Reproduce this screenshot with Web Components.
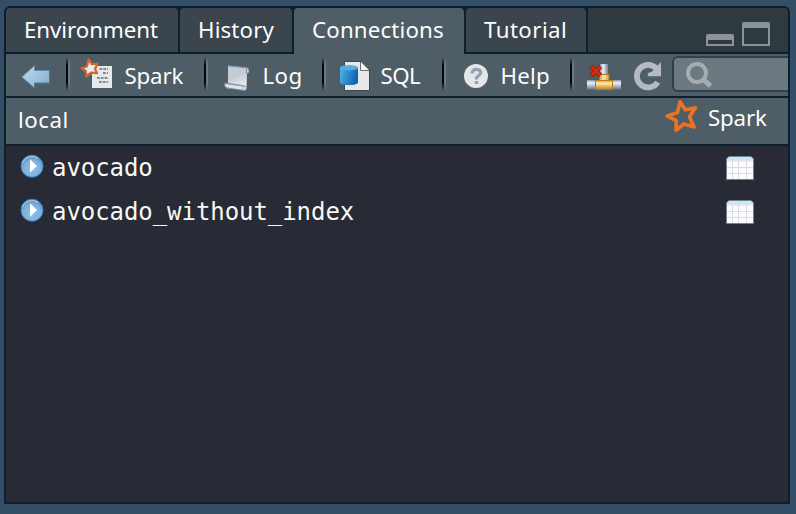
<!DOCTYPE html>
<html lang="en"><head><meta charset="utf-8"><title>Connections</title>
<style>
html,body{margin:0;height:100%;background:#344e65;overflow:hidden}
</style></head><body>
<connections-app></connections-app>
<script>
const define=(name,html,after)=>customElements.define(name,class extends HTMLElement{
  constructor(){super();this.attachShadow({mode:'open'}).innerHTML=html;}
  connectedCallback(){if(after)after(this);}
});
const ctx=document.createElement('canvas').getContext('2d');

// Label whose letter spacing is adjusted to fill the "ink" width.
define('ui-text',`<style>:host{display:block;font:22.3px/30px "Noto Sans","Open Sans",sans-serif;color:#fbfcfc;white-space:pre}</style><slot></slot>`,el=>{
  const t=el.textContent;ctx.font='22.3px "Noto Sans"';
  const m=ctx.measureText(t),l=m.actualBoundingBoxLeft,r=m.actualBoundingBoxRight;
  el.style.letterSpacing=(+el.getAttribute('ink')-l-r)/(t.length-1)+'px';
  el.style.marginLeft=l+'px';
});
define('ui-separator',`<style>:host{display:block;width:4px;height:34px;align-self:flex-start;margin-top:3px}
div{height:100%;display:flex;-webkit-mask:linear-gradient(transparent,#000 25%,#000 75%,transparent);mask:linear-gradient(transparent,#000 25%,#000 75%,transparent)}
b{width:2px;background:#050708}i{width:1px;background:#65727b}i+i{background:#707e87}</style><div><b></b><i></i><i></i></div>`);
define('tool-button',`<style>:host{display:flex;height:42px;align-items:center;flex:none;box-sizing:border-box}
::slotted(svg){display:block;flex:none}::slotted(ui-text){position:relative;top:1px}</style><slot></slot>`,el=>{el.style.width=el.getAttribute('w')+'px'});
define('panel-tab',`<style>:host{display:block;box-sizing:border-box;height:46px;flex:none;background:#3a454d;border-right:2px solid #0c1f31;border-bottom:2px solid #0c1f31}
:host([active]){background:#4f5d67;border-bottom:0}
:host{border-top-left-radius:4px;border-top-right-radius:5px;padding-top:7px}</style><slot></slot>`,el=>{el.style.width=el.getAttribute('w')+'px';el.style.paddingLeft=el.getAttribute('pad')+'px'});
define('search-box',`<style>:host{display:block;width:116px;height:42px;overflow:hidden}
div{box-sizing:border-box;width:130px;height:36px;margin-top:2px;border:2px solid #2f404d;border-radius:6px;background:#6c7981}svg{display:block}</style>
<div><svg width="60" height="32" viewBox="674 58 60 32"><circle cx="697" cy="73" r="9" fill="none" stroke="#a6adb1" stroke-width="4"/><path d="M703 79L710.5 86" stroke="#a6adb1" stroke-width="5"/></svg></div>`);
define('connection-row',`<style>:host{display:flex;height:44px;align-items:flex-start}
.name{font:24px/44px "DejaVu Sans Mono",monospace;color:#f8f8f2;letter-spacing:-.06px;flex:1;margin-left:6px;height:44px}
svg{display:block;flex:none}</style>
<svg width="40" height="44" viewBox="6 146 40 44"><defs><radialGradient id="g" cx=".5" cy=".65" r=".6"><stop offset="0" stop-color="#8fbfe8"/><stop offset=".65" stop-color="#7db1de"/><stop offset="1" stop-color="#5996cb"/></radialGradient></defs>
<circle cx="32" cy="166.2" r="11" fill="url(#g)" stroke="#4386c3"/><path d="M22.5 163A10 10 0 0 1 38 158.5" fill="none" stroke="#b8daf2" stroke-width="1.2" opacity=".65"/><path d="M30 159.3L37 166L30 172.8Z" fill="#fff"/></svg>
<div class="name"><slot></slot></div>
<svg width="62" height="44" viewBox="726 146 62 44"><path d="M726.5 179.5V159L729 156.5H751L753.5 159V179.5Z" fill="#fcfcff" stroke="#77808b"/><path d="M727 160.5V159L729.2 157H750.8L753 159V160.5Z" fill="#c5e9fb"/><path d="M727 161H753M727 167.5H753M727 173.5H753M732.5 160V179M738.5 160V179M746.5 160V179" stroke="#d9dbe7"/></svg>`);
define('connections-app',`<style>
:host{display:block;padding:6px 6px 10px 4px;box-sizing:border-box;width:796px;height:514px}
.panel{box-sizing:border-box;width:786px;height:498px;border:2px solid #0c1f31;border-radius:6px 6px 0 0;background:#282a36;overflow:hidden}
.tabs{display:flex;height:46px;background:#0c1f31}
.fill{flex:1;height:44px;background:#2f3940;display:flex;justify-content:flex-end}
.tools{display:flex;height:42px;background:#4f5d67;border-bottom:2px solid #0c1f31}
.head{display:flex;justify-content:space-between;height:46px;background:#4f5d67;border-bottom:2px solid #0c1f31}
.right{display:flex}svg{display:block}
</style>
<div class="panel">
<div class="tabs">
<panel-tab w="174" pad="20"><ui-text ink="132">Environment</ui-text></panel-tab>
<panel-tab w="114" pad="20"><ui-text ink="74.5">History</ui-text></panel-tab>
<panel-tab w="172" pad="19" active><ui-text ink="130">Connections</ui-text></panel-tab>
<panel-tab w="122" pad="18"><ui-text ink="81">Tutorial</ui-text></panel-tab>
<div class="fill"><svg width="84" height="44" viewBox="704 8 84 44" fill="#8a9499"><path fill-rule="evenodd" d="M706 46V36Q706 34 708 34H732Q734 34 734 36V46ZM708 40V44H732V40Z"/><path fill-rule="evenodd" d="M742 46V24Q742 22 744 22H768Q770 22 770 24V46ZM744 28V44H768V28Z"/></svg></div>
</div>
<div class="tools">
<tool-button w="60"><svg width="60" height="42" viewBox="6 54 60 42"><defs><linearGradient id="a" x1="0" x2="1" y2=".6"><stop stop-color="#bddced"/><stop offset="1" stop-color="#8cb5d0"/></linearGradient></defs><path d="M22 77L34.5 65.5V70.5H49.5V83H34.5V88Z" fill="url(#a)" stroke="#648ea9"/><path d="M34.5 83.3H49.7V70.5M34.8 83V88" fill="none" stroke="#3c7395"/></svg></tool-button>
<ui-separator></ui-separator>
<tool-button w="134"><svg width="55.5" height="42" viewBox="70 54 55.5 42"><path d="M92 66H112V88H92Z" fill="#e7e8e8"/><path d="M99.5 69H108M103 73H108M97 78H108M99 82H108" stroke="#6f9493" stroke-width="1.8" stroke-dasharray="2.8 1"/><path d="M88.6 59.5L91.8 64.2L97.8 63.6L95 68.7L97 73.2L91 72.6L86.4 76.5L85.8 71L81.5 68.3L87 66.2Z" fill="#ececec" stroke="#ce682c" stroke-width="2.3" stroke-linejoin="round"/></svg><ui-text ink="58">Spark</ui-text></tool-button>
<ui-separator></ui-separator>
<tool-button w="114"><svg width="56.5" height="42" viewBox="208 54 56.5 42"><defs><linearGradient id="l" x1="0" x2=".35" y2="1"><stop stop-color="#c1ced5"/><stop offset=".5" stop-color="#c4cbd0"/><stop offset="1" stop-color="#ececec"/></linearGradient></defs><path d="M228 65.5L246.5 67.5Q249.5 68 249 71Q248.5 74 247 73L246.5 89H228Z" fill="url(#l)"/><path d="M228 66L247 68Q249 68.5 248.7 70.5M246.5 69V73.3L248 73" fill="none" stroke="#7798ad"/><path d="M225 83L242 85.5Q247.5 86 246.5 89Q245.8 91 243 90.3L226 87.8Q223.7 85.5 225 83Z" fill="#dce4e9" stroke="#708a9c"/><path d="M225 83.5L243 86V89" fill="none" stroke="#8497a5" stroke-width=".8"/></svg><ui-text ink="36">Log</ui-text></tool-button>
<ui-separator></ui-separator>
<tool-button w="116"><svg width="55.5" height="42" viewBox="326 54 55.5 42"><defs><linearGradient id="d" y1="0" y2=".25"><stop stop-color="#55b2e8"/><stop offset="1" stop-color="#0f63b3"/></linearGradient></defs><path d="M344.5 61.5H361L369.5 70V90.5H344.5Z" fill="#e8e8e8" stroke="#3c464e"/><path d="M360.5 62V70.5H369" fill="#f4f4f4" stroke="#686f77"/><path d="M340 67.5V82.5C340 86 358 86 358 82.5V67.5Z" fill="url(#d)"/><ellipse cx="349" cy="67.7" rx="9" ry="2.7" fill="#51b0e0"/></svg><ui-text ink="39.5">SQL</ui-text></tool-button>
<ui-separator></ui-separator>
<tool-button w="124"><svg width="56.5" height="42" viewBox="446 54 56.5 42"><circle cx="476" cy="76" r="12" fill="#e5e6e8"/><path d="M472.2 73.5Q472.2 69.3 476.2 69.3Q480.6 69.3 480.6 72.5Q480.6 74.5 478.3 75.8Q476.3 77 476.3 79.4" fill="none" stroke="#91a1b8" stroke-width="3.2"/><rect x="474.7" y="81" width="3.4" height="3" fill="#91a1b8"/></svg><ui-text ink="46.5">Help</ui-text></tool-button>
<ui-separator></ui-separator>
<tool-button w="52"><svg width="52" height="42" viewBox="574 54 52 42"><defs><linearGradient id="p" x2="0" y2="1"><stop stop-color="#8790a7"/><stop offset=".3" stop-color="#f0f2f6"/><stop offset=".65" stop-color="#acb5c6"/><stop offset="1" stop-color="#68728d"/></linearGradient><linearGradient id="v"><stop stop-color="#8a94ad"/><stop offset=".4" stop-color="#eef0f5"/><stop offset="1" stop-color="#7782a0"/></linearGradient><linearGradient id="o" x2="0" y2="1"><stop stop-color="#e3ad3c"/><stop offset=".35" stop-color="#fae8b5"/><stop offset="1" stop-color="#bd7d10"/></linearGradient></defs><rect x="600" y="64" width="8" height="11" fill="url(#v)"/><rect x="587" y="80" width="34" height="9.5" fill="url(#p)"/><rect x="599.5" y="74.5" width="9.5" height="7" fill="#e3b965" stroke="#af7517"/><path d="M602 75H606V81H602Z" fill="#f2dba3"/><rect x="595.5" y="80.5" width="17" height="9" fill="url(#o)" stroke="#b97a10"/><path d="M591 66.5L600.5 75.5M600.5 66.5L591 75.5" stroke="#952512" stroke-width="4.6"/><path d="M591.5 67L600 75M600 67L591.5 75" stroke="#d52b0d" stroke-width="2.8"/></svg></tool-button>
<tool-button w="46"><svg width="46" height="42" viewBox="626 54 46 42"><path d="M657.7 82.2A11.3 11.3 0 1 1 656.5 68.5" fill="none" stroke="#b3bac3" stroke-width="5.8"/><path d="M661 62V76.3H647.8V73.2L652 71.5Z" fill="#b3bac3"/></svg></tool-button>
<search-box></search-box>
</div>
<div class="head"><ui-text ink="47.5" style="padding:7px 0 0 13px">local</ui-text>
<div class="right"><svg width="44" height="46" viewBox="665.5 98 44 46"><path d="M680.5 101.8L685.8 109.8L696 107.8L690 116.8L694.5 127L684.5 124L676.6 130L676.8 120.6L667.8 116L678 112.6Z" fill="none" stroke="#e97325" stroke-width="3.7" stroke-linejoin="round"/></svg><ui-text ink="58" style="width:80px;padding-top:5px">Spark</ui-text></div></div>
<connection-row>avocado</connection-row>
<connection-row>avocado_without_index</connection-row>
</div>`);
</script></body></html>
